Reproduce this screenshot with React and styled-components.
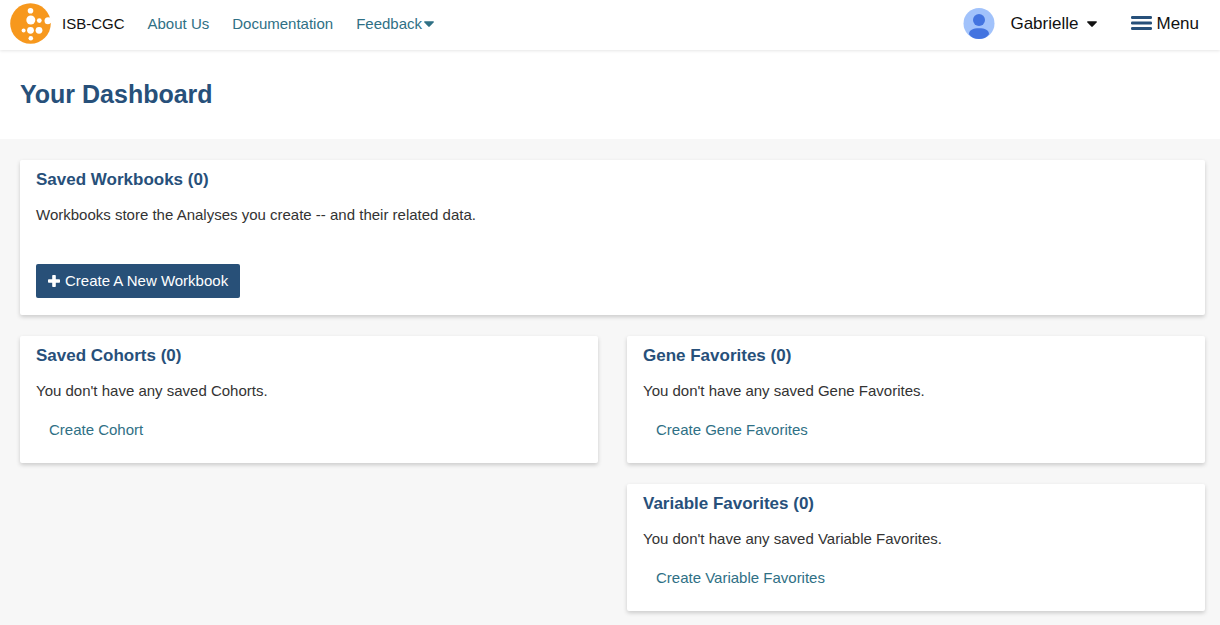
import React from "react";
import styled, { createGlobalStyle } from "styled-components";

const navy = "#27507a";
const teal = "#2f7085";

const GlobalStyle = createGlobalStyle`
  * { box-sizing: border-box; }
  body {
    margin: 0;
    background: #f7f7f7;
    color: #333;
    font-family: "Liberation Sans", Arial, sans-serif;
    font-size: 15px;
    line-height: 20px;
  }
`;

const Header = styled.header`
  position: relative;
  display: flex;
  align-items: center;
  justify-content: space-between;
  height: 50px;
  padding: 0 21px 2px 10px;
  background: #fff;
  box-shadow: 0 1px 3px rgba(0, 0, 0, 0.1);
`;

const Group = styled.div`
  display: flex;
  align-items: center;
`;

const Brand = styled.a`
  display: flex;
  align-items: center;
  gap: 11px;
  color: #111;
  text-decoration: none;
`;

const Nav = styled.nav`
  display: flex;
  gap: 23px;
  margin-left: 23px;
`;

const TextLink = styled.a`
  color: ${teal};
  text-decoration: none;
`;

const NavButton = styled.button`
  display: flex;
  align-items: center;
  gap: ${(p) => p.$gap}px;
  padding: 0;
  border: 0;
  background: none;
  color: ${(p) => p.$color};
  font: inherit;
  font-size: ${(p) => p.$size}px;
  cursor: pointer;
`;

const UserTools = styled(Group)`
  gap: 34px;
`;

const UserName = styled.span`
  margin: 0 9px 0 15px;
`;

const TitleBar = styled.div`
  padding: 29px 20px 30px;
  background: #fff;
`;

const Title = styled.h1`
  margin: 0;
  color: ${navy};
  font-size: 25px;
  line-height: 30px;
`;

const Dashboard = styled.main`
  display: flex;
  flex-direction: column;
  gap: 21px;
  padding: 21px 15px 13px 20px;
`;

const Columns = styled.div`
  display: grid;
  grid-template-columns: 1fr 1fr;
  align-items: start;
  gap: 29px;
`;

const Column = styled.div`
  display: flex;
  flex-direction: column;
  gap: 21px;
`;

const Card = styled.section`
  padding: 10px 16px ${(p) => (p.$wide ? 17 : 23)}px;
  border-radius: 2px;
  background: #fff;
  box-shadow: 0 2px 4px rgba(0, 0, 0, 0.18);
`;

const CardTitle = styled.h2`
  margin: 0 0 15px;
  color: ${navy};
  font-size: 17px;
  line-height: 20px;
`;

const CardText = styled.p`
  margin: 0;
`;

const CardAction = styled.div`
  padding: 19px 13px 0;
`;

const PrimaryButton = styled.button`
  display: flex;
  align-items: center;
  gap: 5px;
  height: 34px;
  margin-top: 39px;
  padding: 0 12px;
  border: 0;
  border-radius: 2px;
  background: #285078;
  color: #fff;
  font: inherit;
  cursor: pointer;
`;

const Logo = () => (
  <svg width="41" height="42" viewBox="0 0 41 42" aria-hidden="true">
    <circle cx="20.5" cy="20.5" r="20.300" fill="#f7981d" />
    <g fill="#fff">
      <circle cx="20.500" cy="7.800" r="2.800" />
      <circle cx="20.800" cy="17" r="4.500" />
      <circle cx="29.300" cy="17.600" r="2.400" />
      <circle cx="38" cy="17.700" r="3.500" />
      <circle cx="13.600" cy="27.400" r="2" />
      <circle cx="20.500" cy="27.300" r="3.400" />
      <circle cx="29" cy="27.300" r="3.400" />
      <circle cx="20.800" cy="35.200" r="2.300" />
    </g>
  </svg>
);

const Avatar = () => (
  <svg width="32" height="32" viewBox="0 0 32 32" aria-hidden="true">
    <circle cx="16" cy="15.500" r="15.500" fill="#a1c2fb" />
    <circle cx="16" cy="12" r="6" fill="#4374e0" />
    <path d="M6 26.200C6 22 10 20.200 16 20.200s10 1.800 10 6C23.500 29.600 20 31 16 31S8.500 29.600 6 26.200Z" fill="#4374e0" />
  </svg>
);

const Caret = () => (
  <svg width="10" height="6" viewBox="0 0 10 6" aria-hidden="true">
    <path d="M.7 .3h8.600q1 .4.3 1.300L5.700 5.600q-.7.600-1.400 0L.4 1.600Q-.3.700.7.3Z" fill="currentColor" />
  </svg>
);

const MenuIcon = () => (
  <svg width="21" height="16" viewBox="0 0 21 16" fill={navy} aria-hidden="true">
    <rect width="21" height="3" rx="1.200" />
    <rect y="5.500" width="21" height="3" rx="1.200" />
    <rect y="11" width="21" height="3" rx="1.200" />
  </svg>
);

const Plus = () => (
  <svg width="12" height="12" viewBox="0 0 12 12" aria-hidden="true">
    <path d="M5 0h2q.8 0 .8.800v3.400h3.400q.8 0 .8.800v2q0 .8-.8.800H7.800v3.400q0 .8-.8.800H5q-.8 0-.8-.8V7.800H.8Q0 7.800 0 7V5q0-.8.800-.8h3.400V.8Q4.200 0 5 0Z" fill="currentColor" />
  </svg>
);

const SavedCard = ({ title, text, action }) => (
  <Card>
    <CardTitle>{title} (0)</CardTitle>
    <CardText>{text}</CardText>
    <CardAction>
      <TextLink href="#">{action}</TextLink>
    </CardAction>
  </Card>
);

export default function App() {
  return (
    <>
      <GlobalStyle />
      <Header>
        <Group>
          <Brand href="#">
            <Logo />
            ISB-CGC
          </Brand>
          <Nav>
            <TextLink href="#">About Us</TextLink>
            <TextLink href="#">Documentation</TextLink>
            <NavButton type="button" $gap={2} $color={teal} $size={15}>
              Feedback
              <Caret />
            </NavButton>
          </Nav>
        </Group>
        <UserTools>
          <NavButton type="button" $gap={0} $color="#111" $size={17}>
            <Avatar />
            <UserName>Gabrielle</UserName>
            <Caret />
          </NavButton>
          <NavButton type="button" $gap={4} $color="#111" $size={17}>
            <MenuIcon />
            Menu
          </NavButton>
        </UserTools>
      </Header>
      <TitleBar>
        <Title>Your Dashboard</Title>
      </TitleBar>
      <Dashboard>
        <Card $wide>
          <CardTitle>Saved Workbooks (0)</CardTitle>
          <CardText>Workbooks store the Analyses you create -- and their related data.</CardText>
          <PrimaryButton type="button">
            <Plus />
            Create A New Workbook
          </PrimaryButton>
        </Card>
        <Columns>
          <Column>
            <SavedCard title="Saved Cohorts" text="You don't have any saved Cohorts." action="Create Cohort" />
          </Column>
          <Column>
            <SavedCard title="Gene Favorites" text="You don't have any saved Gene Favorites." action="Create Gene Favorites" />
            <SavedCard title="Variable Favorites" text="You don't have any saved Variable Favorites." action="Create Variable Favorites" />
          </Column>
        </Columns>
      </Dashboard>
    </>
  );
}
